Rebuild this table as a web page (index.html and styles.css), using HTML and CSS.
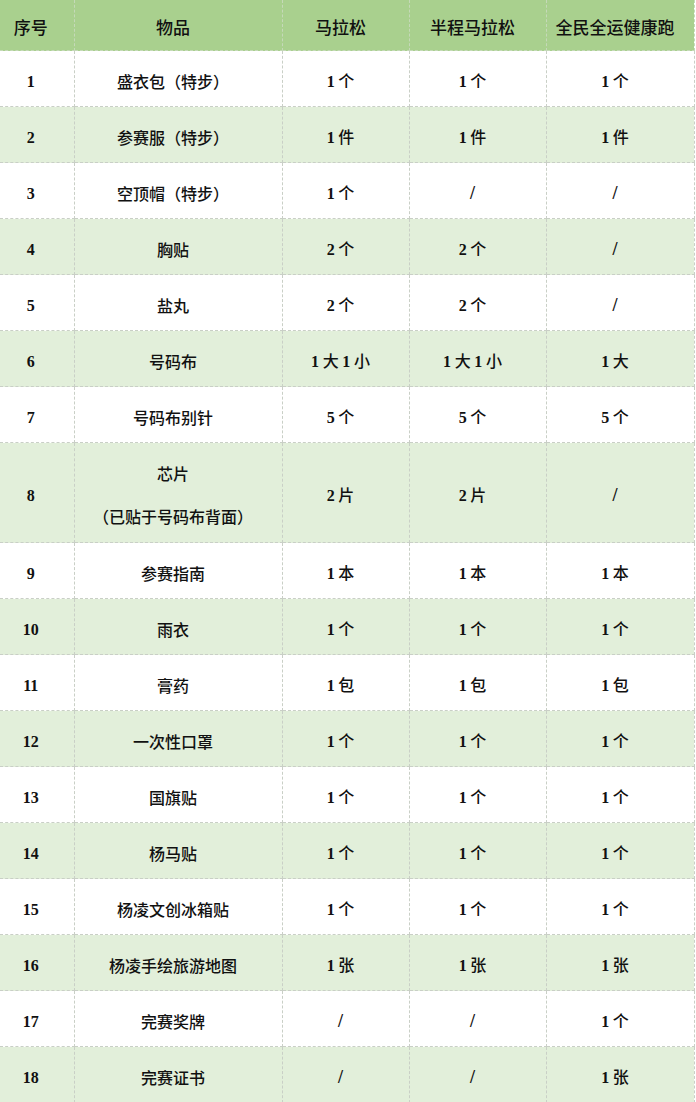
FILE: index.html
```html
<!DOCTYPE html>
<html lang="zh">
<head>
<meta charset="utf-8">
<link rel="stylesheet" href="styles.css">
</head>
<body>
<table class="kit">
  <colgroup>
    <col class="c1"><col class="c2"><col class="c3"><col class="c4"><col class="c5">
  </colgroup>
  <thead>
    <tr class="head"><th class="idx">序号</th><th>物品</th><th>马拉松</th><th>半程马拉松</th><th>全民全运健康跑</th></tr>
  </thead>
  <tbody>
    <tr><td class="idx"><b>1</b></td><td>盛衣包（特步）</td><td><b>1</b> 个</td><td><b>1</b> 个</td><td><b>1</b> 个</td></tr>
    <tr class="alt"><td class="idx"><b>2</b></td><td>参赛服（特步）</td><td><b>1</b> 件</td><td><b>1</b> 件</td><td><b>1</b> 件</td></tr>
    <tr><td class="idx"><b>3</b></td><td>空顶帽（特步）</td><td><b>1</b> 个</td><td><b class="sl">/</b></td><td><b class="sl">/</b></td></tr>
    <tr class="alt"><td class="idx"><b>4</b></td><td>胸贴</td><td><b>2</b> 个</td><td><b>2</b> 个</td><td><b class="sl">/</b></td></tr>
    <tr><td class="idx"><b>5</b></td><td>盐丸</td><td><b>2</b> 个</td><td><b>2</b> 个</td><td><b class="sl">/</b></td></tr>
    <tr class="alt"><td class="idx"><b>6</b></td><td>号码布</td><td><b>1</b> 大 <b>1</b> 小</td><td><b>1</b> 大 <b>1</b> 小</td><td><b>1</b> 大</td></tr>
    <tr><td class="idx"><b>7</b></td><td>号码布别针</td><td><b>5</b> 个</td><td><b>5</b> 个</td><td><b>5</b> 个</td></tr>
    <tr class="alt tall"><td class="idx"><b>8</b></td><td class="two">芯片<br>（已贴于号码布背面）</td><td><b>2</b> 片</td><td><b>2</b> 片</td><td><b class="sl">/</b></td></tr>
    <tr><td class="idx"><b>9</b></td><td>参赛指南</td><td><b>1</b> 本</td><td><b>1</b> 本</td><td><b>1</b> 本</td></tr>
    <tr class="alt"><td class="idx"><b>10</b></td><td>雨衣</td><td><b>1</b> 个</td><td><b>1</b> 个</td><td><b>1</b> 个</td></tr>
    <tr><td class="idx"><b>11</b></td><td>膏药</td><td><b>1</b> 包</td><td><b>1</b> 包</td><td><b>1</b> 包</td></tr>
    <tr class="alt"><td class="idx"><b>12</b></td><td>一次性口罩</td><td><b>1</b> 个</td><td><b>1</b> 个</td><td><b>1</b> 个</td></tr>
    <tr><td class="idx"><b>13</b></td><td>国旗贴</td><td><b>1</b> 个</td><td><b>1</b> 个</td><td><b>1</b> 个</td></tr>
    <tr class="alt"><td class="idx"><b>14</b></td><td>杨马贴</td><td><b>1</b> 个</td><td><b>1</b> 个</td><td><b>1</b> 个</td></tr>
    <tr><td class="idx"><b>15</b></td><td>杨凌文创冰箱贴</td><td><b>1</b> 个</td><td><b>1</b> 个</td><td><b>1</b> 个</td></tr>
    <tr class="alt"><td class="idx"><b>16</b></td><td>杨凌手绘旅游地图</td><td><b>1</b> 张</td><td><b>1</b> 张</td><td><b>1</b> 张</td></tr>
    <tr><td class="idx"><b>17</b></td><td>完赛奖牌</td><td><b class="sl">/</b></td><td><b class="sl">/</b></td><td><b>1</b> 个</td></tr>
    <tr class="alt"><td class="idx"><b>18</b></td><td>完赛证书</td><td><b class="sl">/</b></td><td><b class="sl">/</b></td><td><b>1</b> 张</td></tr>
  </tbody>
</table>
</body>
</html>
```
FILE: styles.css
```css
html, body {
  margin: 0;
  padding: 0;
  background: #ffffff;
}
body {
  width: 696px;
  overflow: hidden;
}
.kit {
  width: 694px;
  border-collapse: collapse;
  table-layout: fixed;
  font-family: "Noto Sans CJK SC", "Noto Sans", sans-serif;
  font-size: 16px;
  color: #111111;
}
.c1 { width: 74px; }
.c2 { width: 208px; }
.c3 { width: 127px; }
.c4 { width: 137px; }
.c5 { width: 148px; }
.kit th, .kit td {
  text-align: center;
  vertical-align: middle;
  padding: 4px 10px 0 0;
  border: 1px dashed #c9cfc6;
  line-height: 20px;
  white-space: nowrap;
}
.kit th {
  background: #a9d08e;
  height: 46px;
  font-weight: 500;
  font-size: 17px;
  border-top: none;
  border-color: #c5d9b8;
}
.kit td {
  height: 51px;
  font-weight: 500;
}
.kit .idx {
  padding-right: 12px;
}
.kit tr.alt td {
  background: #e2efda;
}
.kit tr.tall td {
  height: 95px;
}
.kit td.two {
  line-height: 43px;
}
.kit td:first-child, .kit th:first-child { border-left: none; }
.kit b {
  font-family: "Liberation Serif", "Times New Roman", serif;
  font-weight: 700;
  font-size: 16px;
}
.kit b.sl {
  font-size: 18px;
}
```
